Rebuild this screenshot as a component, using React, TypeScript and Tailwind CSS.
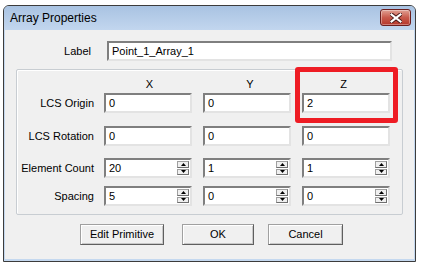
import React from "react";

function TextBox({ value, spin = false }: { value: string; spin?: boolean }) {
  return (
    <div className="flex h-[20px] w-[88px] items-stretch border-2 border-t-[#7f7f7f] border-l-[#7f7f7f] border-b-[#e3e3e3] border-r-[#e3e3e3] bg-white">
      <span className="flex-1 pl-[3px] leading-[16px]">{value}</span>
      {spin && (
        <div className="my-[1px] mr-[1px] flex w-[12px] flex-col gap-[1px]">
          <SpinButton up />
          <SpinButton />
        </div>
      )}
    </div>
  );
}

function SpinButton({ up = false }: { up?: boolean }) {
  return (
    <div className="flex flex-1 items-center justify-center border border-[#a0a0a0] border-b-[#6f6f6f] border-r-[#6f6f6f] bg-[#f0f0f0]">
      <svg width="5" height="3" viewBox="0 0 5 3">
        {up ? <path d="M2.5 0 L5 3 L0 3 Z" fill="#000" /> : <path d="M0 0 L5 0 L2.5 3 Z" fill="#000" />}
      </svg>
    </div>
  );
}

function Row({ label, values, spin = false, className = "" }: { label: string; values: string[]; spin?: boolean; className?: string }) {
  return (
    <div className={`flex items-center ${className}`}>
      <span className="w-[77px] whitespace-nowrap text-right">{label}</span>
      <div className="ml-[10px] flex gap-[11px]">
        {values.map((v, i) => (
          <TextBox key={i} value={v} spin={spin} />
        ))}
      </div>
    </div>
  );
}

function Button({ children, width }: { children: React.ReactNode; width: string }) {
  return (
    <button
      type="button"
      className={`${width} h-[21px] border border-[#a0a0a0] border-b-[#5f5f5f] border-r-[#5f5f5f] bg-[#f0f0f0] text-center shadow-[inset_1px_1px_0_#ffffff,inset_-1px_-1px_0_#c8c8c8]`}
    >
      {children}
    </button>
  );
}

export default function App() {
  return (
    <div className="h-[266px] w-[421px] bg-white pl-[3px] pt-[5px] font-['Liberation_Sans',Arial,sans-serif] text-[11px] text-black">
      {/* window frame */}
      <div className="flex h-[257px] w-[413px] flex-col overflow-hidden rounded-t-[6px] border border-[#3c3c3c] bg-[#c4d8ef]">
        {/* title bar */}
        <div className="flex h-[24px] shrink-0 items-center justify-between bg-gradient-to-b from-[#a9c3e2] to-[#c2d6ee] pl-[6px] pr-[4px]">
          <span className="text-[12px] leading-none">Array Properties</span>
          <div className="mb-[1px] flex h-[17px] w-[31px] items-center justify-center rounded-[3px] border border-[#6b1e1e] bg-gradient-to-b from-[#dfa094] via-[#c85a4c] to-[#b5352a] shadow-[inset_0_0_0_1px_rgba(255,255,255,0.35)]">
            <svg width="12" height="10" viewBox="0 0 12 10">
              <path d="M1 1 L11 9 M11 1 L1 9" stroke="#4a1a1a" strokeWidth="4" strokeLinecap="square" />
              <path d="M1.5 1.5 L10.5 8.5 M10.5 1.5 L1.5 8.5" stroke="#ffffff" strokeWidth="2.2" strokeLinecap="square" />
            </svg>
          </div>
        </div>

        {/* client area */}
        <div className="relative mx-[1px] mb-[2px] flex-1 bg-[#f0f0f0]">
          {/* label row */}
          <div className="mt-[11px] flex items-center">
            <span className="w-[86px] text-right">Label</span>
            <div className="ml-[16px] flex h-[20px] w-[285px] items-center border-2 border-t-[#7f7f7f] border-l-[#7f7f7f] border-b-[#e3e3e3] border-r-[#e3e3e3] bg-white pl-[3px]">
              Point_1_Array_1
            </div>
          </div>

          {/* group box */}
          <div className="ml-[11px] mt-[8px] h-[146px] w-[387px] rounded-[2px] border border-[#c8cdd2] shadow-[inset_1px_1px_0_#ffffff]">
            <div className="ml-[87px] mt-[9px] flex h-[11px] gap-[11px] leading-none">
              <span className="w-[88px] pl-[3px] text-center">X</span>
              <span className="w-[88px] pl-[6px] text-center">Y</span>
              <span className="w-[88px] pr-[5px] text-center">Z</span>
            </div>
            <Row label="LCS Origin" values={["0", "0", "2"]} className="mt-[3px]" />
            <Row label="LCS Rotation" values={["0", "0", "0"]} className="mt-[13px]" />
            <Row label="Element Count" values={["20", "1", "1"]} spin className="mt-[12px]" />
            <Row label="Spacing" values={["5", "0", "0"]} spin className="mt-[8px]" />
          </div>

          {/* buttons */}
          <div className="ml-[75px] mt-[9px] flex gap-[18px]">
            <Button width="w-[84px]">Edit Primitive</Button>
            <Button width="w-[72px]">OK</Button>
            <div className="-ml-[4px]">
              <Button width="w-[75px]">Cancel</Button>
            </div>
          </div>

          {/* red highlight annotation */}
          <div className="pointer-events-none absolute left-[290px] top-[37px] h-[56px] w-[103px] rounded-[3px] border-[5px] border-[#ee1c24]" />
        </div>
      </div>
    </div>
  );
}
